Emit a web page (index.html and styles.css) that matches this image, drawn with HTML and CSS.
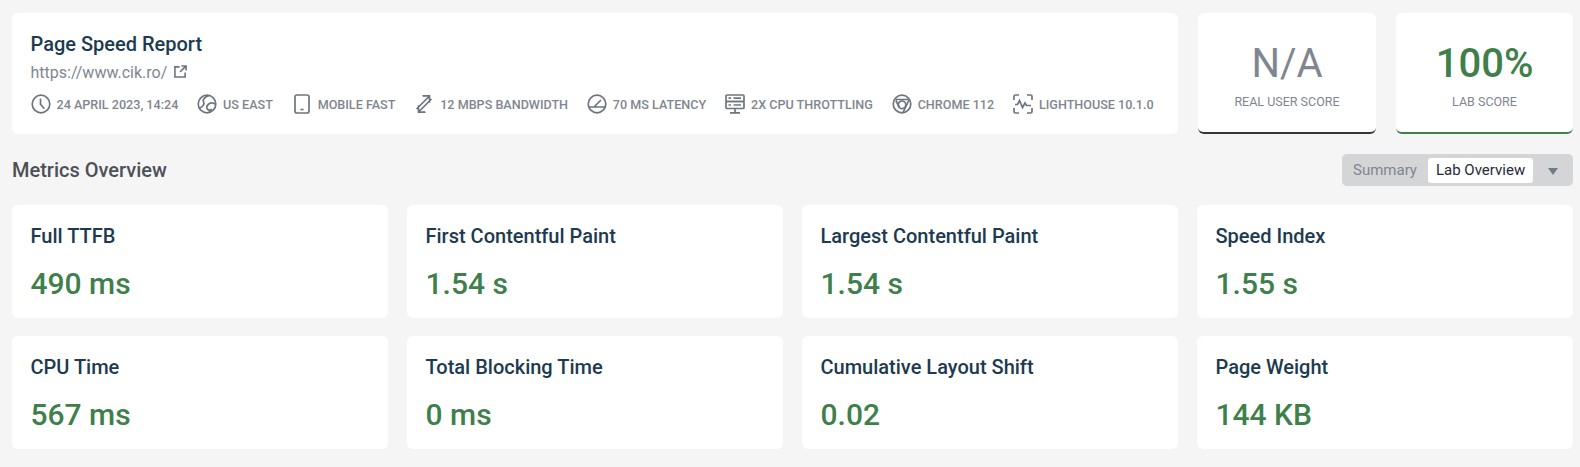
FILE: index.html
```html
<!DOCTYPE html>
<html lang="en">
<head>
<meta charset="utf-8">
<title>Page Speed Report</title>
<link rel="stylesheet" href="styles.css">
</head>
<body>
<main class="page">
  <section class="top">
    <div class="card report">
      <h1 class="title">Page Speed Report</h1>
      <div class="url"><span>https://www.cik.ro/</span>
        <svg class="ext" viewBox="0 0 14 14"><path d="M6 2H1v11h11V8M8 1h5v5M13 1 6.500 7.500"/></svg>
      </div>
      <ul class="meta">
        <li><svg class="ic" viewBox="0 0 20 20"><circle cx="10" cy="10" r="8.800"/><path d="M9.500 4.500v5.800l3.800 4.500"/></svg>24 April 2023, 14:24</li>
        <li><svg class="ic" viewBox="0 0 20 20"><circle cx="10" cy="10" r="8.800"/><path d="M12 1.500C8 3 5.500 5 6.500 7.500 7.500 10 6.500 12.500 2.500 14M18.800 10.500c-2-1.500-5-2-7-.5-2 1.500-2.500 3.500-1.500 5 1 1.500 3.500 1.500 4.500 0M10.500 15c1 1.500 2.500 2.500 3.500 3"/></svg>US East</li>
        <li><svg class="ic ic-t" viewBox="0 0 16 20"><rect x="1" y="1" width="14" height="18" rx="2"/><path d="M6.500 15.500h3"/></svg>Mobile Fast</li>
        <li><svg class="ic" viewBox="0 0 20 20"><path d="M8.500 1.800h7v7M15 2.500 2.500 15M11.500 18.200h-7v-7M5 17.500 17.500 5"/></svg>12 Mbps Bandwidth</li>
        <li><svg class="ic" viewBox="0 0 20 20"><circle cx="10" cy="10" r="8.800"/><path d="M2 13h16M7.500 12.500 14 6"/></svg>70 ms Latency</li>
        <li><svg class="ic" viewBox="0 0 20 20"><rect x="1" y="1" width="18" height="6.500" rx="1"/><rect x="1" y="7.500" width="18" height="7" rx="1"/><path d="M3.500 4.200h2.500M8.500 4.200h7.500M3.500 11h2.500M8.500 11h7.500M10 14.500v4M5 18.800h10"/></svg>2x CPU Throttling</li>
        <li><svg class="ic" viewBox="0 0 20 20"><circle cx="10" cy="10" r="8.800"/><circle cx="10" cy="10.800" r="3.800"/><path d="M4 5.500h12.500M17 6 11 18.500M3.800 6.500 7.500 13.500"/></svg>Chrome 112</li>
        <li><svg class="ic" viewBox="0 0 20 20"><path d="M1 6V2.500A1.500 1.500 0 0 1 2.500 1H6M14 1h3.500A1.500 1.500 0 0 1 19 2.500V6M19 14v3.500a1.500 1.500 0 0 1-1.500 1.500H14M6 19H2.500A1.500 1.500 0 0 1 1 17.500V14M2 10.500h2.500L6.500 6.500l3 7 2.500-4.500 1.500 2.500H18"/></svg>Lighthouse 10.1.0</li>
      </ul>
    </div>
    <div class="card score score-na">
      <div class="score-value">N/A</div>
      <div class="score-label">Real User Score</div>
    </div>
    <div class="card score score-good">
      <div class="score-value">100%</div>
      <div class="score-label">Lab Score</div>
    </div>
  </section>

  <header class="section-head">
    <h2 class="section-title">Metrics Overview</h2>
    <div class="tabs">
      <span class="tab">Summary</span>
      <span class="tab tab-active">Lab Overview</span>
      <span class="caret"></span>
    </div>
  </header>

  <section class="metrics">
    <div class="card metric"><div class="m-label">Full TTFB</div><div class="m-value">490 ms</div></div>
    <div class="card metric"><div class="m-label">First Contentful Paint</div><div class="m-value">1.54 s</div></div>
    <div class="card metric"><div class="m-label">Largest Contentful Paint</div><div class="m-value">1.54 s</div></div>
    <div class="card metric"><div class="m-label">Speed Index</div><div class="m-value">1.55 s</div></div>
    <div class="card metric"><div class="m-label">CPU Time</div><div class="m-value">567 ms</div></div>
    <div class="card metric"><div class="m-label">Total Blocking Time</div><div class="m-value">0 ms</div></div>
    <div class="card metric"><div class="m-label">Cumulative Layout Shift</div><div class="m-value">0.02</div></div>
    <div class="card metric"><div class="m-label">Page Weight</div><div class="m-value">144 KB</div></div>
  </section>
</main>
</body>
</html>
```
FILE: styles.css
```css
* { box-sizing: border-box; }
html, body { margin: 0; padding: 0; }
body {
  background: #f5f5f5;
  font-family: Roboto, "Liberation Sans", sans-serif;
  color: #1c3a50;
  height: 467px;
  overflow: hidden;
}
.page { padding: 13px 7px 0 12px; }
.card { background: #fff; border-radius: 6px; }

.top {
  display: grid;
  grid-template-columns: 1166px 178px 177px;
  column-gap: 20px;
  height: 121px;
}
.report { padding: 19px 19px 0 18.500px; }
.title { margin: 0; font-size: 20px; line-height: 24px; font-weight: 480; color: #1c3a50; }
.url { display: flex; align-items: center; gap: 7px; margin-top: 7px; font-size: 16px; line-height: 20px; color: #80868f; }
.ext { width: 13px; height: 13px; fill: none; stroke: #6d737c; stroke-width: 1.700; margin-top: -3px; }
.meta {
  list-style: none;
  display: flex;
  gap: 18.800px;
  margin: 12px 0 0;
  padding: 0;
  font-size: 12.600px;
  line-height: 20px;
  font-weight: 500;
  text-transform: uppercase;
  color: #80868f;
  white-space: nowrap;
}
.meta li { display: flex; align-items: center; gap: 6px; }
.ic { width: 20px; height: 20px; margin-top: -2px; fill: none; stroke: #6f757e; stroke-width: 1.700; flex: none; }
.ic-t { width: 16px; margin: -2px 2px 0 2px; }

.score {
  display: flex;
  flex-direction: column;
  align-items: center;
  padding-top: 27px;
}
.score-na { border-bottom: 2px solid #33353b; }
.score-good { border-bottom: 2px solid #3f7f4c; }
.score-value { font-size: 40px; line-height: 48px; font-weight: 400; color: #80868f; }
.score-good .score-value { color: #3f7f4c; font-weight: 480; }
.score-label { margin-top: 4px; font-size: 12.500px; line-height: 20px; color: #80868f; text-transform: uppercase; }

.section-head {
  display: flex;
  align-items: center;
  justify-content: space-between;
  height: 71px;
}
.section-title { margin: 0; font-size: 20px; line-height: 24px; font-weight: 480; color: #4e5057; }
.tabs {
  display: flex;
  align-items: center;
  height: 32px;
  width: 231px;
  padding: 0 4px 0 11px;
  background: #d4d5d7;
  border-radius: 5px;
  font-size: 15px;
  margin-top: 1px;
}
.tab { color: #80868f; margin-right: 11px; }
.tab-active { background: #fff; color: #1f2a38; padding: 0 8px; line-height: 25px; border-radius: 3px; margin-right: 0; }
.caret {
  margin-left: 15px;
  margin-top: 2px;
  border-left: 5.500px solid transparent;
  border-right: 5.500px solid transparent;
  border-top: 7px solid #6f7c8a;
}

.metrics {
  display: grid;
  grid-template-columns: repeat(4, 376px);
  column-gap: 19px;
  row-gap: 18.500px;
}
.metric { height: 112.500px; padding: 19px 18.500px 0; }
.m-label { font-size: 20px; line-height: 24px; font-weight: 480; color: #1c3a50; }
.m-value { margin-top: 17px; font-size: 30px; line-height: 38px; font-weight: 480; color: #3f7f4c; }
```
